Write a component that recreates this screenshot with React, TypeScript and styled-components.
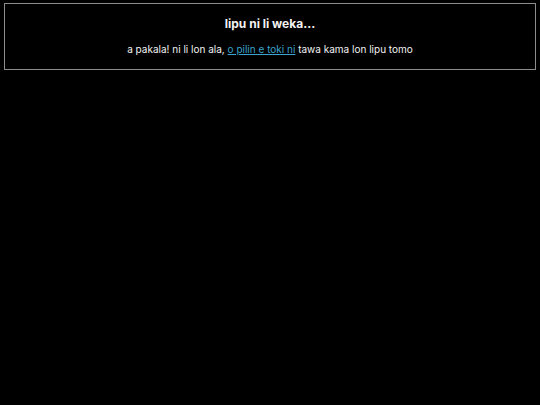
import React from 'react'
import styled, { createGlobalStyle } from 'styled-components'

const GlobalStyle = createGlobalStyle`
  html, body {
    margin: 0;
    padding: 0;
    background: #000;
  }
  body {
    font-family: 'Inter', 'Noto Sans', sans-serif;
    color: #f2f2f2;
  }
`

const Page = styled.div`
  padding: 3px 4px;
`

const Notice = styled.section`
  border: 1px solid #8c8c8c;
  padding: 11px 16px 13px;
  text-align: center;
`

const Title = styled.h1`
  margin: 0 0 9px;
  font-size: 12px;
  font-weight: 700;
  line-height: 18px;
`

const Message = styled.p`
  margin: 0;
  font-size: 10px;
  line-height: 14px;
`

const Link = styled.a`
  color: #3aa3cb;
  text-decoration: underline;
`

const App = () => (
  <>
    <GlobalStyle />
    <Page>
      <Notice>
        <Title>lipu ni li weka...</Title>
        <Message>
          a pakala! ni li lon ala, <Link href="#">o pilin e toki ni</Link> tawa kama lon lipu tomo
        </Message>
      </Notice>
    </Page>
  </>
)

export default App
